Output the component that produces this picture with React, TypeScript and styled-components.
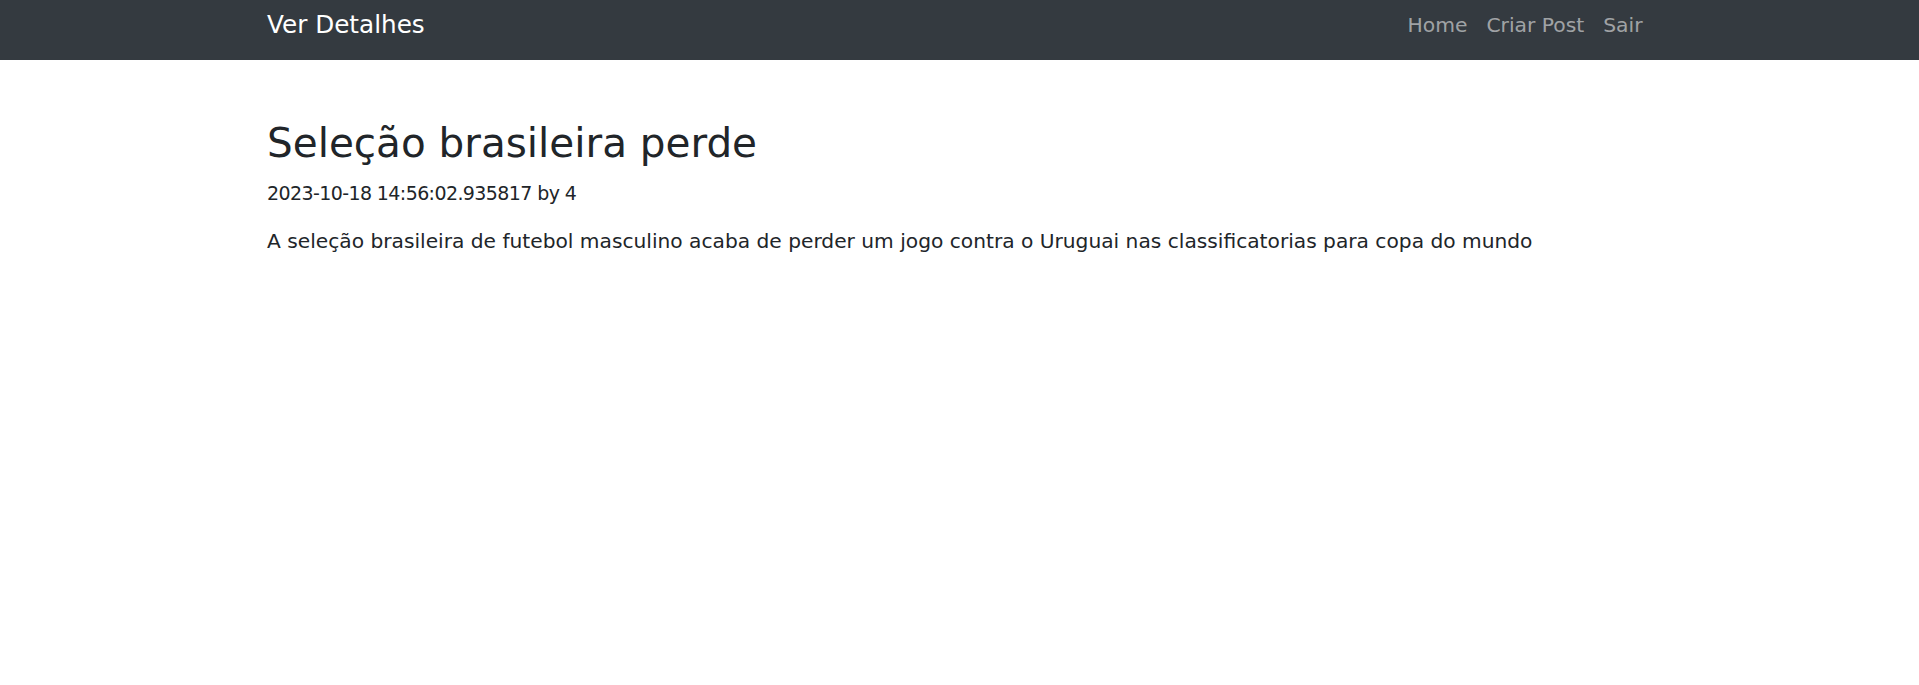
import React from "react";
import styled, { createGlobalStyle } from "styled-components";

const GlobalStyle = createGlobalStyle`
  html, body {
    margin: 0;
    padding: 0;
    background: #ffffff;
  }
  body {
    font-family: "DejaVu Sans", "Open Sans", sans-serif;
    color: #212529;
  }
  * { box-sizing: border-box; }
`;

const Navbar = styled.nav`
  height: 60px;
  background: #343a40;
`;

const Container = styled.div`
  max-width: 1385px;
  margin: 0 auto;
`;

const NavInner = styled(Container)`
  height: 100%;
  display: flex;
  align-items: center;
  justify-content: space-between;
`;

const Brand = styled.a`
  font-size: 24.7px;
  line-height: 1;
  color: #ffffff;
  text-decoration: none;
  margin-top: -9px;
`;

const NavList = styled.ul`
  list-style: none;
  display: flex;
  margin: -9px 0 0;
  padding: 0;
`;

const NavLink = styled.a`
  display: block;
  padding: 0 9.5px;
  font-size: 20.3px;
  line-height: 1;
  color: rgba(255, 255, 255, 0.55);
  text-decoration: none;
`;

const Main = styled(Container)`
  padding-top: 59px;
`;

const Title = styled.h1`
  margin: 0;
  font-size: 40.5px;
  font-weight: 400;
  line-height: 1.2;
`;

const Meta = styled.p`
  margin: 11px 0 0;
  font-size: 19px;
  letter-spacing: -0.6px;
  line-height: 1.5;
`;

const Body = styled.p`
  margin: 19px 0 0;
  font-size: 20.2px;
  line-height: 1.5;
`;

export default function App() {
  return (
    <>
      <GlobalStyle />
      <Navbar>
        <NavInner>
          <Brand href="#">Ver Detalhes</Brand>
          <NavList>
            <li><NavLink href="#">Home</NavLink></li>
            <li><NavLink href="#">Criar Post</NavLink></li>
            <li><NavLink href="#">Sair</NavLink></li>
          </NavList>
        </NavInner>
      </Navbar>
      <Main>
        <Title>Seleção brasileira perde</Title>
        <Meta>2023-10-18 14:56:02.935817 by 4</Meta>
        <Body>
          A seleção brasileira de futebol masculino acaba de perder um jogo contra o Uruguai nas classificatorias para copa do mundo
        </Body>
      </Main>
    </>
  );
}
